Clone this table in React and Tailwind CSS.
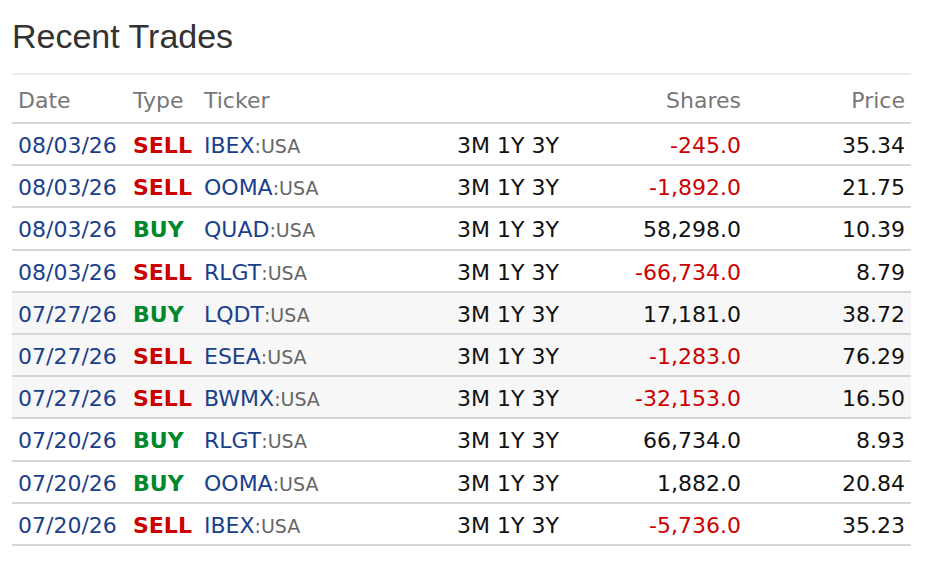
import * as React from "react";

const trades = [
  { date: "08/03/26", type: "SELL", ticker: "IBEX", shares: "-245.0", price: "35.34" },
  { date: "08/03/26", type: "SELL", ticker: "OOMA", shares: "-1,892.0", price: "21.75" },
  { date: "08/03/26", type: "BUY", ticker: "QUAD", shares: "58,298.0", price: "10.39" },
  { date: "08/03/26", type: "SELL", ticker: "RLGT", shares: "-66,734.0", price: "8.79" },
  { date: "07/27/26", type: "BUY", ticker: "LQDT", shares: "17,181.0", price: "38.72", shaded: true },
  { date: "07/27/26", type: "SELL", ticker: "ESEA", shares: "-1,283.0", price: "76.29", shaded: true },
  { date: "07/27/26", type: "SELL", ticker: "BWMX", shares: "-32,153.0", price: "16.50", shaded: true },
  { date: "07/20/26", type: "BUY", ticker: "RLGT", shares: "66,734.0", price: "8.93" },
  { date: "07/20/26", type: "BUY", ticker: "OOMA", shares: "1,882.0", price: "20.84" },
  { date: "07/20/26", type: "SELL", ticker: "IBEX", shares: "-5,736.0", price: "35.23" },
];

const cols = "grid grid-cols-[115px_71px_253px_150px_146px_164px] items-center";

export default function App() {
  return (
    <main className="min-h-screen bg-white px-3 pt-[19px] font-['DejaVu_Sans',Verdana,sans-serif]">
      <h1 className="mb-[20px] font-['Liberation_Sans',Arial,sans-serif] text-[34px] leading-[34px] font-normal text-[#333333]">
        Recent Trades
      </h1>

      <div className="w-[899px] border-t-2 border-[#ebebeb] text-[22px]">
        <div className={`${cols} h-[49px] border-b-2 border-[#d6d6d6] pt-[3px] text-[#777777]`}>
          <div className="pl-1.5">Date</div>
          <div className="pl-1.5">Type</div>
          <div className="pl-1.5">Ticker</div>
          <div />
          <div className="pr-1.5 text-right">Shares</div>
          <div className="pr-1.5 text-right">Price</div>
        </div>

        {trades.map((t, i) => (
          <div
            key={i}
            className={`${cols} h-[42.2px] border-b-2 border-[#d6d6d6] pt-[3px] ${t.shaded ? "bg-[#f7f7f7]" : "bg-white"}`}
          >
            <div className="pl-1.5 text-[#1c3f8c]">{t.date}</div>
            <div className={`pl-1.5 font-bold ${t.type === "SELL" ? "text-[#cc0000]" : "text-[#00882b]"}`}>
              {t.type}
            </div>
            <div className="pl-1.5 text-[#1c3f8c]">
              {t.ticker}
              <span className="text-[19px] text-[#666666]">:USA</span>
            </div>
            <div className="pl-1.5 text-[#111111]">3M 1Y 3Y</div>
            <div className={`pr-1.5 text-right ${t.shares.startsWith("-") ? "text-[#cc0000]" : "text-[#111111]"}`}>
              {t.shares}
            </div>
            <div className="pr-1.5 text-right text-[#111111]">{t.price}</div>
          </div>
        ))}
      </div>
    </main>
  );
}
